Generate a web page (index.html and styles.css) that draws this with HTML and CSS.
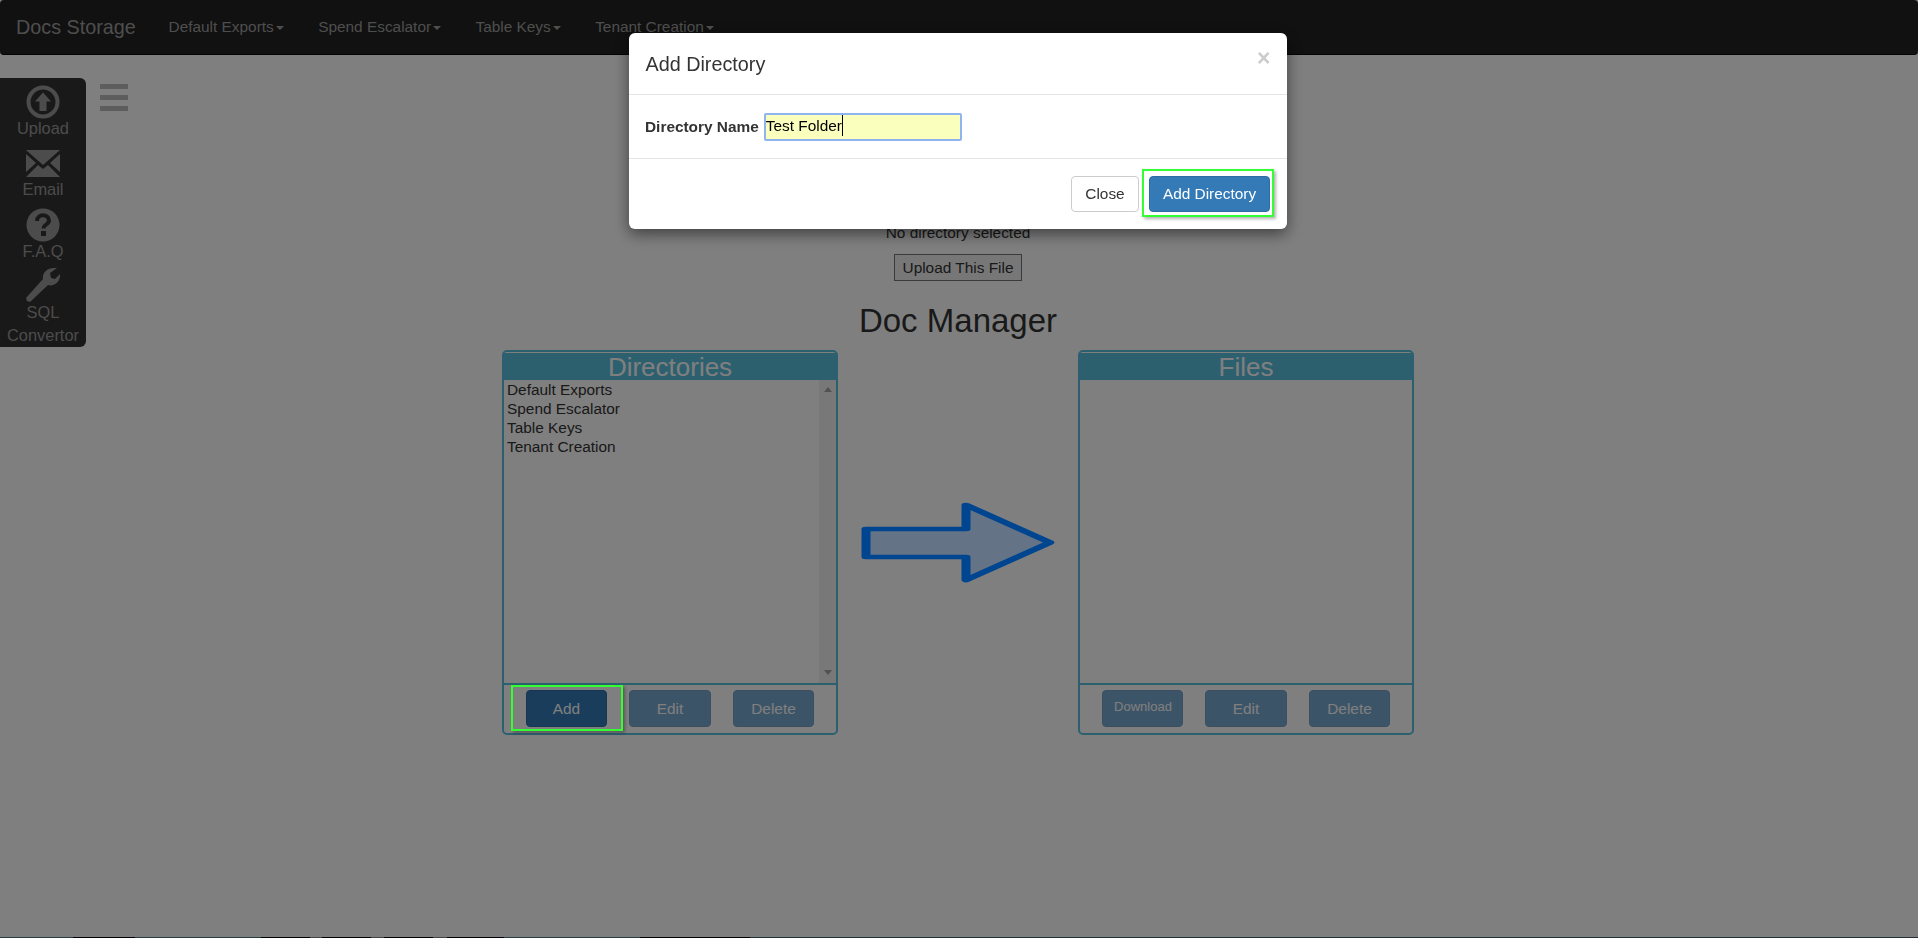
FILE: index.html
```html
<!DOCTYPE html>
<html lang="en">
<head>
<meta charset="utf-8">
<title>Docs Storage</title>
<link rel="stylesheet" href="styles.css">
</head>
<body>
<nav class="navbar">
  <a class="brand">Docs Storage</a>
  <ul class="nav-list">
    <li class="nav-item">Default Exports<span class="caret"></span></li>
    <li class="nav-item">Spend Escalator<span class="caret"></span></li>
    <li class="nav-item">Table Keys<span class="caret"></span></li>
    <li class="nav-item">Tenant Creation<span class="caret"></span></li>
  </ul>
</nav>

<aside class="sidebar">
  <div class="side-item">
    <svg class="side-icon" width="34" height="34" viewBox="0 0 34 34"><circle cx="17" cy="17" r="14.5" fill="none" stroke="#999" stroke-width="4"/><path d="M17 7.5 L25 16.5 H20.5 V26 H13.5 V16.5 H9 Z" fill="#999"/></svg>
    <span>Upload</span>
  </div>
  <div class="side-item email">
    <svg class="side-icon" width="34" height="27" viewBox="0 0 34 27"><path d="M0 0 H34 L17 15 Z M0 4 L10 13 L0 22 Z M34 4 L24 13 L34 22 Z M0 27 L12 15 L17 19 L22 15 L34 27 Z" fill="#999"/></svg>
    <span>Email</span>
  </div>
  <div class="side-item faq">
    <svg class="side-icon" width="34" height="34" viewBox="0 0 34 34"><circle cx="17" cy="17" r="16.5" fill="#999"/><path d="M11 13 C11 5.5 23 5.5 23 12.5 C23 16.5 17.5 16.5 17.5 20.5" fill="none" stroke="#333" stroke-width="4"/><rect x="15" y="23" width="5" height="5" fill="#333"/></svg>
    <span>F.A.Q</span>
  </div>
  <div class="side-item wrench">
    <svg class="side-icon" width="34" height="34" viewBox="0 0 34 34"><path d="M0 30 L17 11 C16 5 21 0 28 0 L31 0 L24 5 L25 10 L29 11 L34 6 C35 13 28 19 22 17 L4 34 L1 33 Z" fill="#999"/></svg>
    <span>SQL</span>
    <span class="side-second">Convertor</span>
  </div>
</aside>
<div class="hamburger"><i></i><i></i><i></i></div>

<main class="main">
  <p class="status">No directory selected</p>
  <button class="upload-btn">Upload This File</button>
  <h1 class="title">Doc Manager</h1>
  <div class="manager">
    <section class="panel">
      <h2 class="panel-head">Directories</h2>
      <div class="panel-body">
        <ul class="dir-list">
          <li>Default Exports</li>
          <li>Spend Escalator</li>
          <li>Table Keys</li>
          <li>Tenant Creation</li>
        </ul>
        <div class="scroll-track"><span class="arrow-up"></span><span class="arrow-down"></span></div>
      </div>
      <div class="panel-foot">
        <button class="btn btn-primary marked-add">Add</button>
        <button class="btn btn-primary btn-off wide">Edit</button>
        <button class="btn btn-primary btn-off">Delete</button>
      </div>
    </section>
    <svg class="flow-arrow" width="192" height="81" viewBox="0 0 96 81" preserveAspectRatio="none"><path d="M2 27 H52 V3 L94 40.5 L52 78 V55 H2 Z" fill="#647486" stroke="#00458f" stroke-width="4.5" stroke-linejoin="round"/></svg>
    <section class="panel">
      <h2 class="panel-head">Files</h2>
      <div class="panel-body"></div>
      <div class="panel-foot">
        <button class="btn btn-primary btn-off btn-small">Download</button>
        <button class="btn btn-primary btn-off wide">Edit</button>
        <button class="btn btn-primary btn-off">Delete</button>
      </div>
    </section>
  </div>
</main>

<div class="page-edge"></div>

<div class="backdrop"></div>
<div class="modal-wrap">
  <div class="modal">
    <header class="modal-head">
      <h4 class="modal-title">Add Directory</h4>
      <span class="close-x">×</span>
    </header>
    <div class="modal-body">
      <label class="field-label">Directory Name</label>
      <div class="text-input"><span class="typed">Test Folder</span></div>
    </div>
    <footer class="modal-foot">
      <button class="btn btn-default">Close</button>
      <button class="btn btn-primary marked-save">Add Directory</button>
    </footer>
  </div>
</div>
</body>
</html>
```
FILE: styles.css
```css
* { box-sizing: border-box; }
html, body { margin: 0; height: 100%; overflow: hidden; }
body {
  background: #fff;
  color: #333;
  font-family: "Liberation Sans", Arial, sans-serif;
  font-size: 15.4px;
  line-height: 20px;
}

/* navbar */
.navbar {
  height: 55px;
  background: #222;
  border-bottom: 1px solid #080808;
  border-radius: 4px;
  display: flex;
  align-items: center;
  color: #9d9d9d;
}
.brand { font-size: 19.8px; margin-left: 16px; margin-right: 15.5px; }
.nav-list { list-style: none; margin: 0; padding: 0; display: flex; }
.nav-item { padding: 0 17.2px; white-space: nowrap; }
.caret {
  display: inline-block;
  margin-left: 2px;
  vertical-align: middle;
  border-top: 4.4px solid #9d9d9d;
  border-left: 4.4px solid transparent;
  border-right: 4.4px solid transparent;
}

/* left tool strip */
.sidebar {
  position: absolute;
  left: 0;
  top: 78px;
  width: 86px;
  height: 269px;
  background: #333;
  border-radius: 0 6px 6px 0;
  color: #999;
  font-size: 16.4px;
  display: flex;
  flex-direction: column;
  align-items: center;
  padding-top: 7px;
}
.side-item { display: flex; flex-direction: column; align-items: center; line-height: 20px; }
.side-item span { margin-top: -1px; }
.side-icon { display: block; }
.email { margin-top: 12px; }
.email span { margin-top: 2px; }
.faq { margin-top: 9px; }
.faq span { margin-top: -1px; }
.wrench { margin-top: 7px; }
.wrench span { margin-top: 0; }
.wrench .side-second { margin-top: 3px; }
.hamburger {
  position: absolute;
  left: 100px;
  top: 84px;
  width: 28px;
  display: flex;
  flex-direction: column;
  gap: 6px;
}
.hamburger i { display: block; height: 5px; background: #bbb; }

/* main */
.main { width: 1916px; padding-top: 168px; display: flex; flex-direction: column; align-items: center; }
.status { margin: 0; color: #333; }
.upload-btn {
  margin-top: 11px;
  width: 128px;
  height: 27px;
  padding: 0;
  background: #efefef;
  border: 1px solid #767676;
  font: inherit;
  color: #333;
}
.title { margin: 20px 0 9px; font-size: 33px; line-height: 40px; font-weight: 400; color: #333; }
.manager { display: flex; align-items: center; gap: 24px; }
.flow-arrow { display: block; position: relative; z-index: 11; overflow: visible; }

.panel {
  width: 336px;
  height: 385px;
  border: 2px solid #5bc0de;
  border-radius: 5px;
  display: flex;
  flex-direction: column;
}
.panel-head {
  margin: 1px 0 0;
  height: 27px;
  background: #5bc0de;
  color: #fff;
  font-size: 26px;
  font-weight: 400;
  line-height: 28px;
  text-align: center;
}
.panel-body { flex: 1; display: flex; min-height: 0; border-bottom: 2px solid #5bc0de; height: 305px; }
.dir-list { flex: 1; list-style: none; margin: 0; padding: 0 3px; line-height: 19px; }
.scroll-track {
  width: 17px;
  background: #f1f1f1;
  display: flex;
  flex-direction: column;
  justify-content: space-between;
  align-items: center;
  padding: 7px 0 8px;
}
.arrow-up { border-bottom: 5px solid #a3a3a3; border-left: 4px solid transparent; border-right: 4px solid transparent; }
.arrow-down { border-top: 5px solid #a3a3a3; border-left: 4px solid transparent; border-right: 4px solid transparent; }
.panel-foot { height: 48px; flex: none; display: flex; align-items: flex-start; gap: 22px; padding: 5px 0 0 22px; }

/* buttons */
.btn {
  height: 37px;
  width: 81px;
  padding: 0;
  border: 1px solid transparent;
  border-radius: 4px;
  font: inherit;
}
.btn.wide { width: 82px; }
.btn-primary { background: #337ab7; border-color: #2e6da4; color: #fff; }
.btn-off { opacity: .65; }
.btn-small { font-size: 13px; padding: 0 0 3px 1px; }
.btn-default { background: #fff; border-color: #ccc; color: #333; width: 68px; height: 36px; }
.marked-add, .marked-save { position: relative; }
.marked-add::after, .marked-save::after {
  content: "";
  position: absolute;
  border: 2.5px solid #3f3;
  box-shadow: 2px 2px 3px rgba(0,0,0,.3);
  z-index: 11;
}
.marked-add::after { left: -16px; right: -17px; top: -6px; bottom: -5px; }
.marked-save { width: 121px; height: 36px; }
.marked-save::after { left: -8px; right: -5px; top: -8px; bottom: -6px; }

.page-edge {
  position: fixed;
  left: 0;
  right: 0;
  bottom: 0;
  height: 1px;
  background: linear-gradient(to right,
    #557480 0 73px, #000 73px 135px, #557480 135px 261px, #000 261px 310px, #888 310px 322px,
    #000 322px 371px, #888 371px 384px, #000 384px 433px, #888 433px 447px, #000 447px 504px,
    #557480 504px 640px, #000 640px 750px, #446070 750px 1918px);
}

/* modal */
.backdrop { position: fixed; inset: 0; background: rgba(0,0,0,.5); z-index: 10; }
.modal-wrap { position: fixed; left: 0; top: 33px; width: 1916px; display: flex; justify-content: center; z-index: 12; }
.modal {
  width: 658px;
  height: 196px;
  background: #fff;
  border-radius: 6px;
  box-shadow: 0 5px 15px rgba(0,0,0,.5);
  display: flex;
  flex-direction: column;
}
.modal-head {
  height: 62px;
  flex: none;
  border-bottom: 1px solid #e5e5e5;
  padding: 0 16.5px;
  display: flex;
  align-items: flex-start;
  justify-content: space-between;
}
.modal-title { margin: 19px 0 0; font-size: 19.8px; line-height: 24px; font-weight: 400; }
.close-x { font-size: 23px; font-weight: 700; line-height: 24px; color: #ccc; margin: 13px 0 0 0; }
.modal-body {
  height: 64px;
  flex: none;
  border-bottom: 1px solid #e5e5e5;
  padding: 0 16px;
  display: flex;
  align-items: center;
  gap: 5px;
}
.field-label { font-weight: 700; }
.text-input {
  width: 198px;
  height: 28px;
  border: 2px solid #8fb4f0;
  border-radius: 2px;
  background: #faffbd;
  color: #000;
  line-height: 23px;
  display: flex;
}
.typed { border-right: 1px solid #000; height: 21px; line-height: 21px; margin-top: 0; }
.modal-foot { flex: 1; display: flex; justify-content: flex-end; align-items: center; gap: 10px; padding: 0 17px; }
```
